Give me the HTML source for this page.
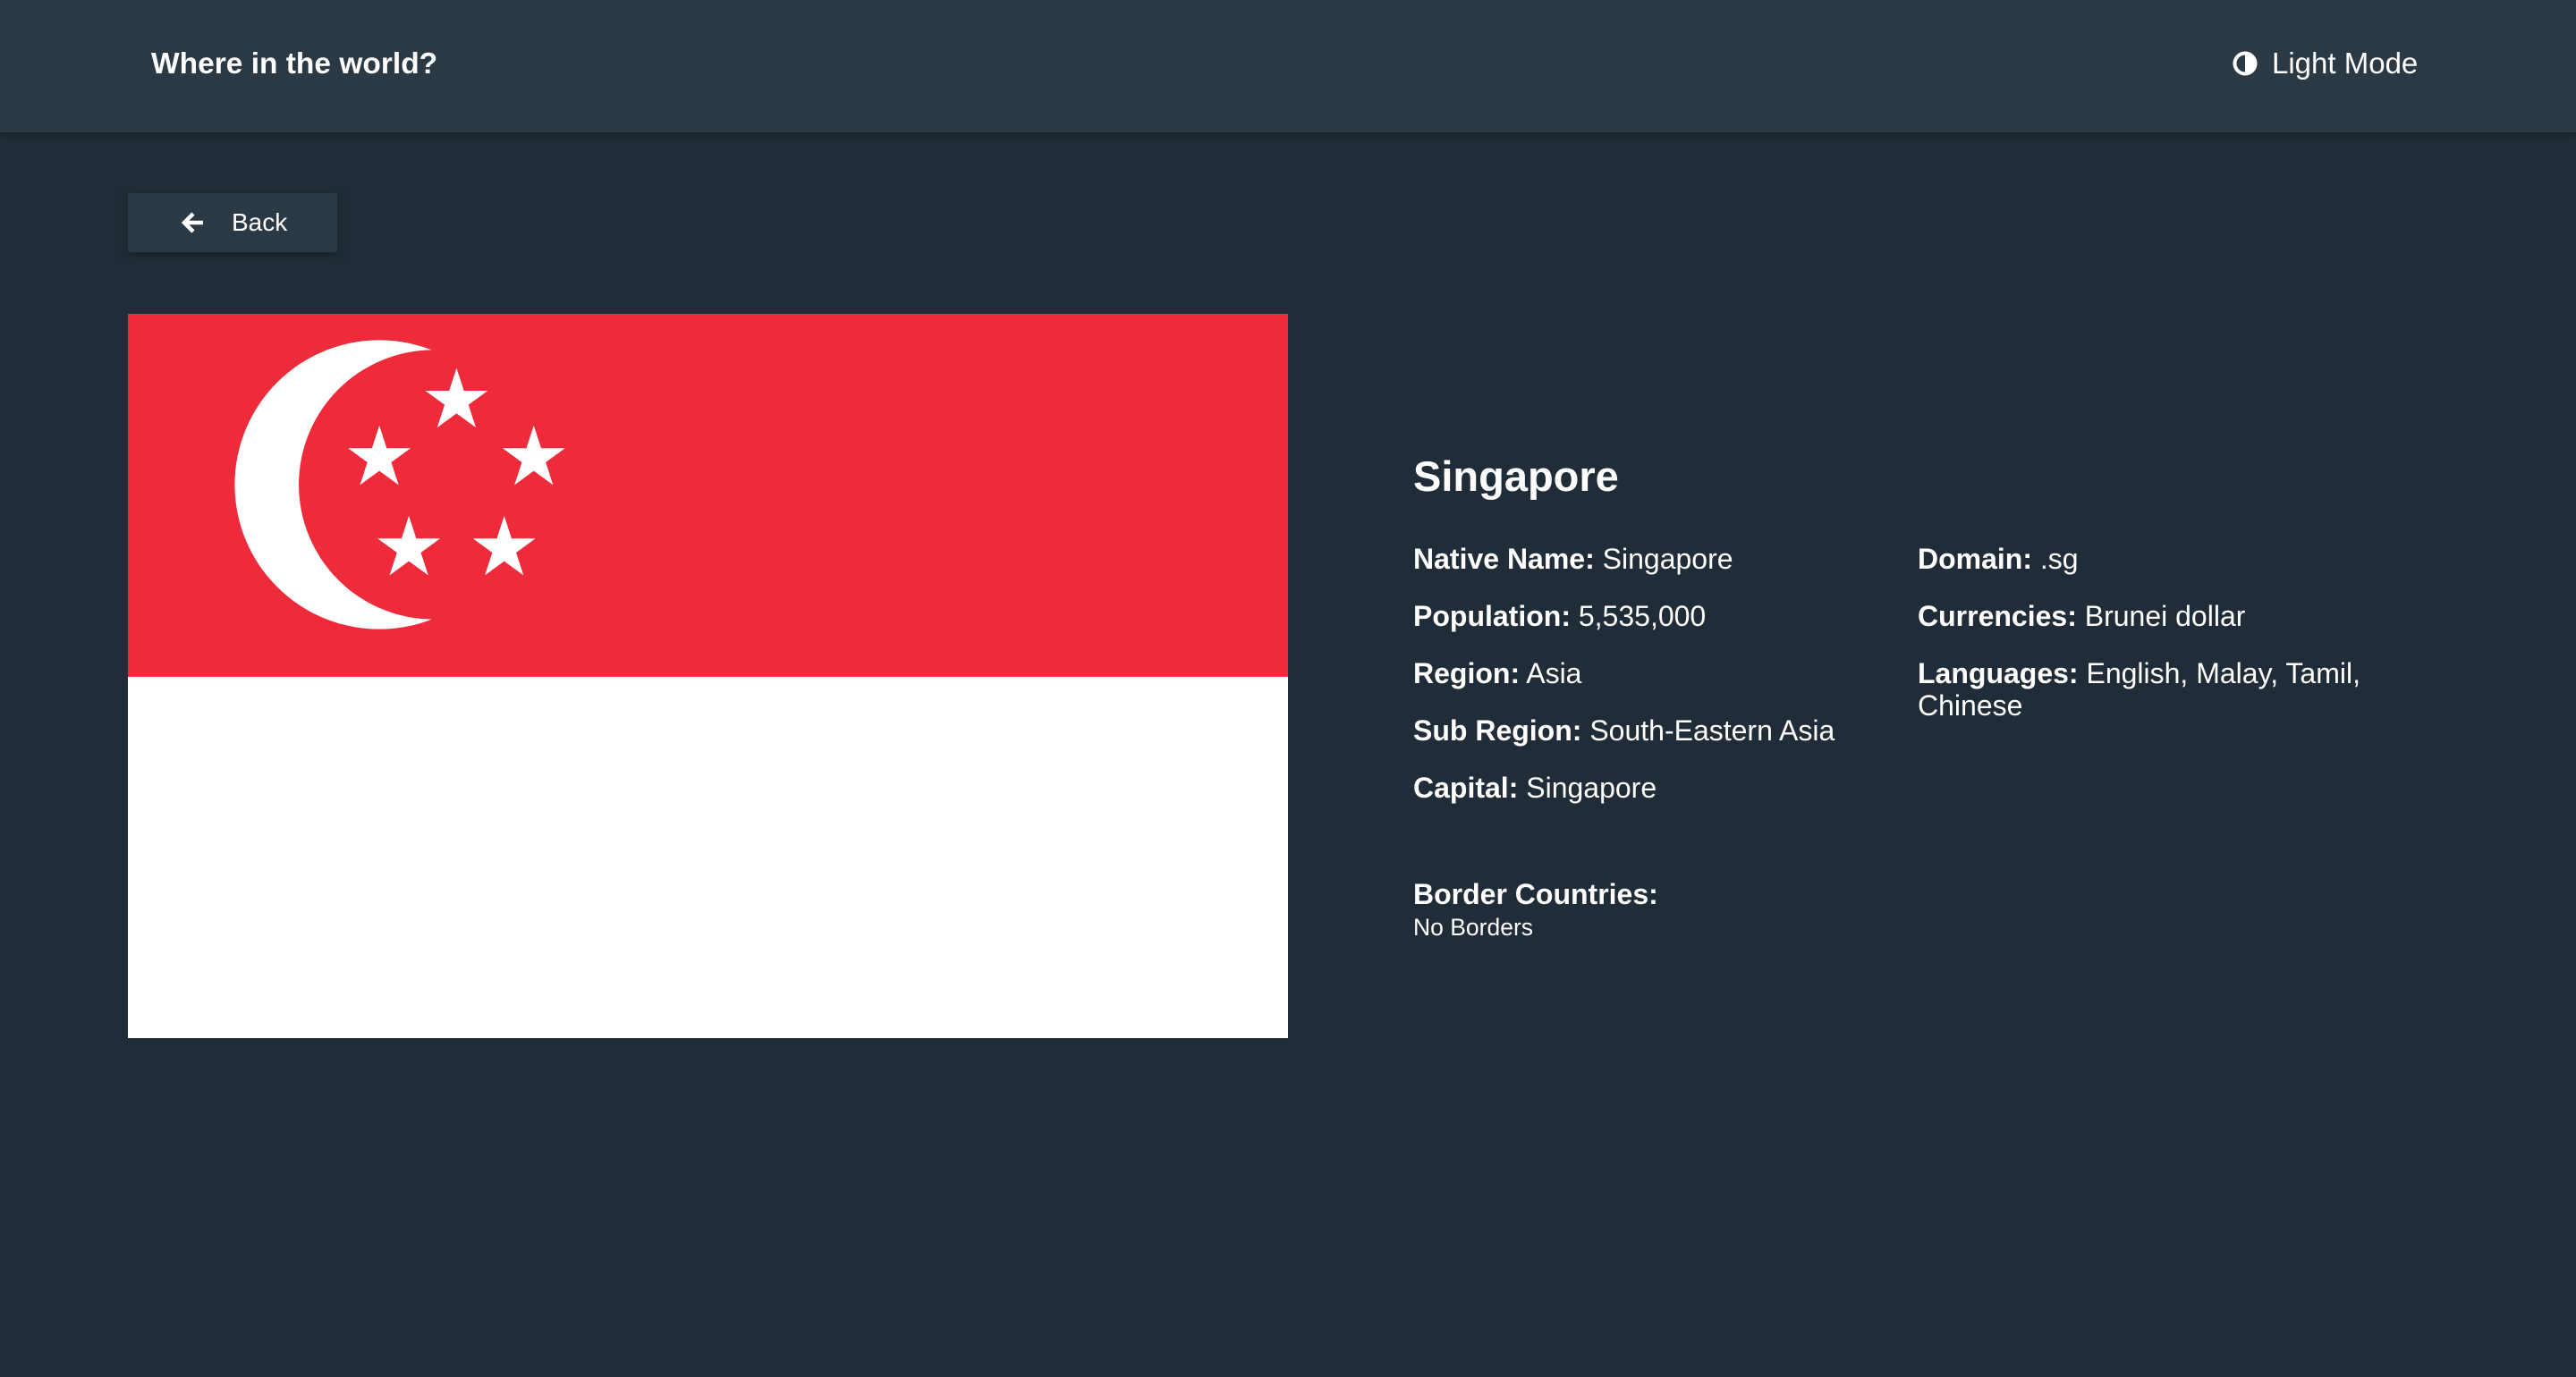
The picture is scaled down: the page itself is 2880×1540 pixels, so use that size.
<!DOCTYPE html>
<html><head><meta charset="utf-8"><style>
*{margin:0;padding:0;box-sizing:border-box}
body{width:2880px;height:1540px;background:#202c37;font-family:"Liberation Sans",sans-serif;color:#fff;position:relative;overflow:hidden}
.hdr{position:absolute;left:0;top:0;width:2880px;height:148px;background:#2b3945;box-shadow:0 3px 8px rgba(0,0,0,.25)}
.title{position:absolute;left:169px;top:53px;font-size:33.5px;font-weight:bold}
.mode{position:absolute;left:2496px;top:52px;font-size:33px;display:flex;align-items:center;gap:16px}
.back{position:absolute;left:143px;top:216px;width:234px;height:66px;background:#2b3945;box-shadow:0 3px 10px rgba(0,0,0,.3);font-size:28px;display:flex;align-items:center}
.back svg{position:absolute;left:60px;top:20px}
.back span{position:absolute;left:116px;top:17px}
.flag{position:absolute;left:143px;top:351px;width:1297px;height:810px}
h1{position:absolute;left:1580px;top:505px;font-size:47px;font-weight:bold}
.row{position:absolute;font-size:32px;line-height:36px}
.row b{font-weight:bold}
</style></head><body>
<div class="hdr">
<div class="title">Where in the world?</div>
<div class="mode"><svg width="28" height="28" viewBox="0 0 28 28"><circle cx="14" cy="14" r="11.5" fill="none" stroke="#fff" stroke-width="4"/><path d="M14 2.5A11.5 11.5 0 0 1 14 25.5Z" fill="#fff"/></svg><span>Light Mode</span></div>
</div>
<div class="back"><svg width="26" height="26" viewBox="0 0 26 26"><path d="M24 13H5M13 3L3 13l10 10" fill="none" stroke="#fff" stroke-width="4.5" stroke-linejoin="miter"/></svg><span>Back</span></div>
<svg class="flag" viewBox="0 0 706 441" preserveAspectRatio="none">
<rect width="706" height="441" fill="#fff"/>
<rect width="706" height="221" fill="#ef2a3b"/>
<circle cx="153" cy="104" r="88" fill="#fff"/>
<circle cx="186" cy="104" r="82" fill="#ef2a3b"/>
<defs><polygon id="s" points="0,-20 4.49,-6.18 19.02,-6.18 7.27,2.36 11.76,16.18 0,7.64 -11.76,16.18 -7.27,2.36 -19.02,-6.18 -4.49,-6.18" fill="#fff"/></defs>
<use href="#s" x="200" y="53"/><use href="#s" x="153" y="88"/><use href="#s" x="247" y="88"/><use href="#s" x="171" y="143"/><use href="#s" x="229" y="143"/>
</svg>
<h1>Singapore</h1>
<div class="row" style="left:1580px;top:607px"><b>Native Name:</b> Singapore</div>
<div class="row" style="left:1580px;top:671px"><b>Population:</b> 5,535,000</div>
<div class="row" style="left:1580px;top:735px"><b>Region:</b> Asia</div>
<div class="row" style="left:1580px;top:799px"><b>Sub Region:</b> South-Eastern Asia</div>
<div class="row" style="left:1580px;top:863px"><b>Capital:</b> Singapore</div>
<div class="row" style="left:2144px;top:607px"><b>Domain:</b> .sg</div>
<div class="row" style="left:2144px;top:671px"><b>Currencies:</b> Brunei dollar</div>
<div class="row" style="left:2144px;top:735px;width:580px"><b>Languages:</b> English, Malay, Tamil,<br>Chinese</div>
<div class="row" style="left:1580px;top:982px"><b>Border Countries:</b></div>
<div class="row" style="left:1580px;top:1019px;font-size:26.5px">No Borders</div>
</body></html>
